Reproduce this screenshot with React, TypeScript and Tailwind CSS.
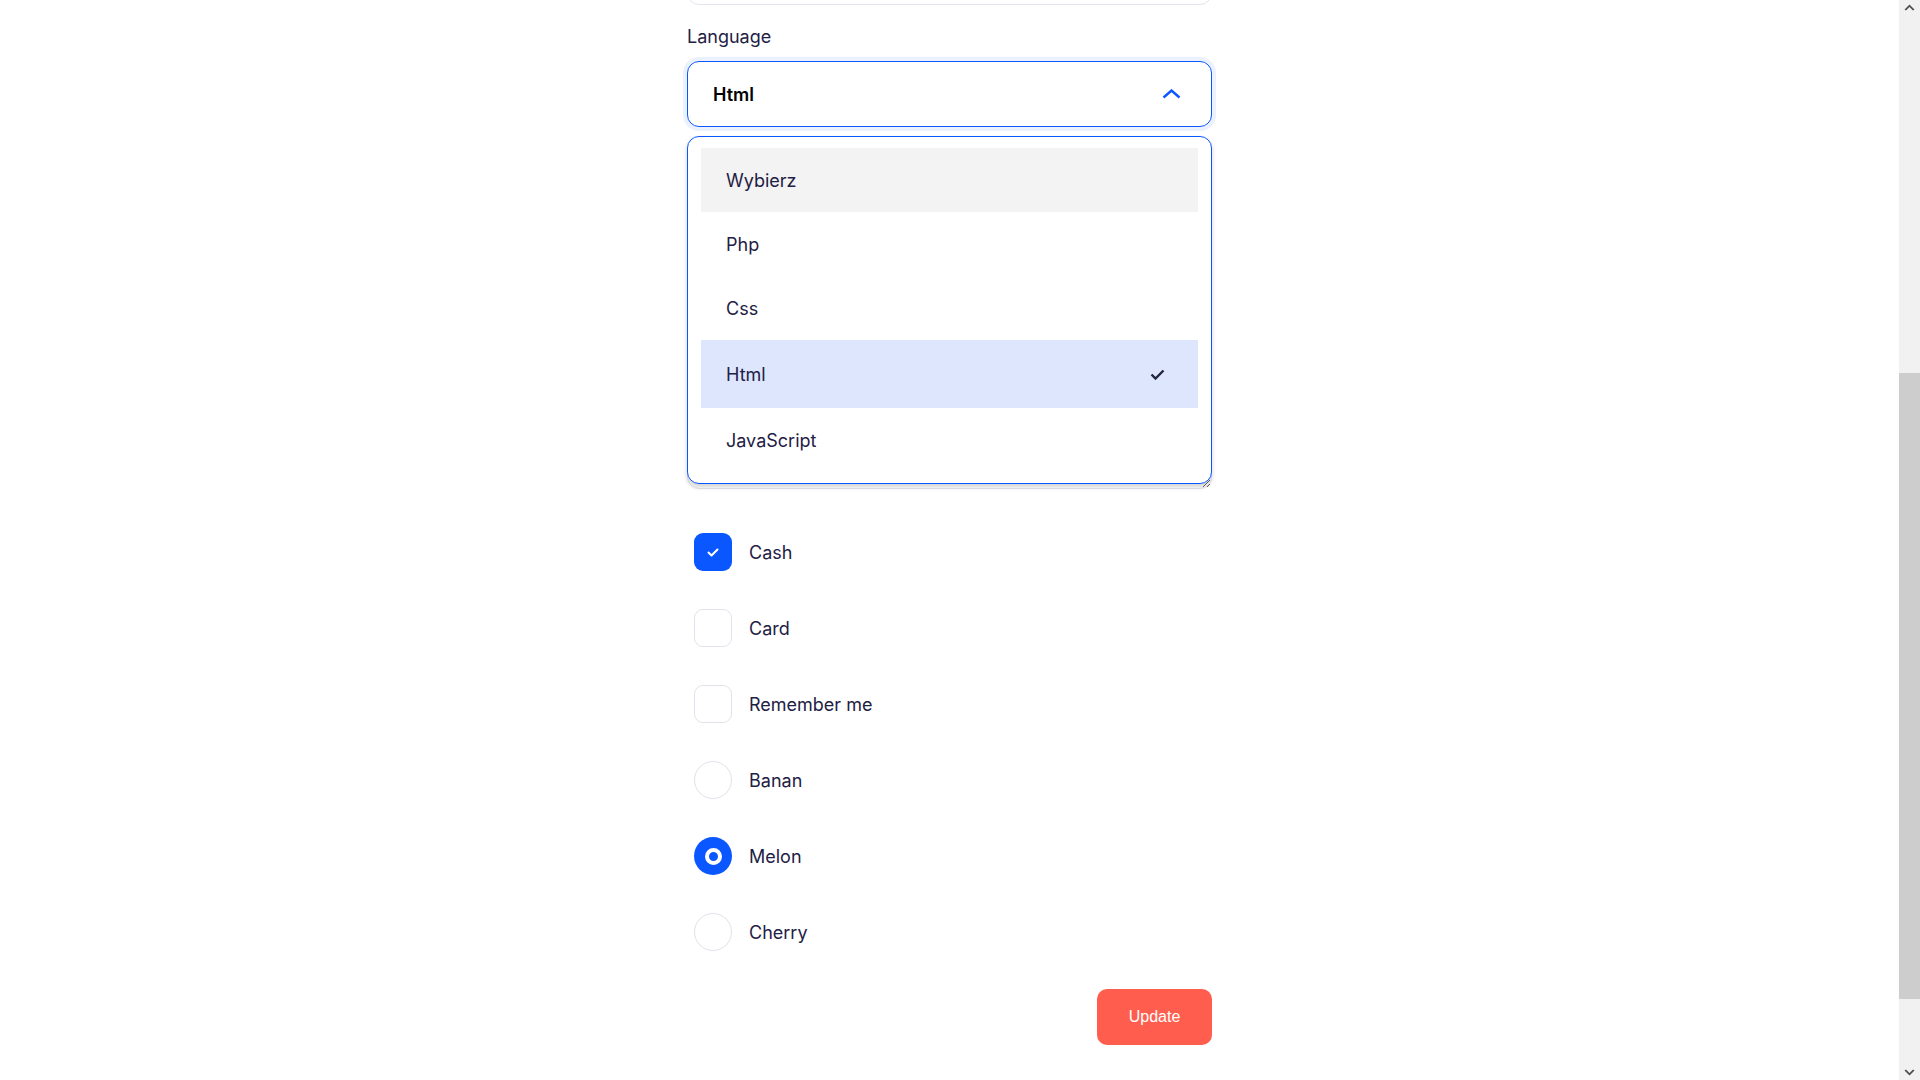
const options = ["Wybierz", "Php", "Css", "Html", "JavaScript"];

function CheckRow({ label, checked, round }: { label: string; checked?: boolean; round?: boolean }) {
  const shape = round ? "rounded-full" : "rounded-[9px]";
  return (
    <label className="flex items-center gap-[17px] pl-[7px] h-[38px]">
      {checked ? (
        <span className={`flex items-center justify-center w-[38px] h-[38px] bg-[#0b57ff] ${shape}`}>
          {round ? (
            <span className="w-[17px] h-[17px] rounded-full border-[4px] border-white" />
          ) : (
            <svg width="12" height="9" viewBox="0 0 12 9" fill="none">
              <path d="M1.5 4.5l3 3 6-6" stroke="white" strokeWidth="2" strokeLinecap="round" strokeLinejoin="round" />
            </svg>
          )}
        </span>
      ) : (
        <span className={`w-[38px] h-[38px] border border-[#e2e2ec] bg-white ${shape}`} />
      )}
      <span className="text-[18px] leading-[27px] text-[#1e2044]">{label}</span>
    </label>
  );
}

function Scrollbar() {
  return (
    <div className="flex flex-col w-[21px] h-screen bg-[#f1f1f1] shrink-0">
      <div className="h-[17px] flex items-start justify-center pt-[4px]">
        <svg width="11" height="7" viewBox="0 0 11 7" fill="#505050">
          <path d="M5.5 0.5L10.5 5.5 9 6.5 5.5 3 2 6.5 0.5 5.5z" />
        </svg>
      </div>
      <div className="h-[356px]" />
      <div className="h-[626px] bg-[#cdcdcd]" />
      <div className="flex-1" />
      <div className="h-[17px] flex items-end justify-center pb-[4px]">
        <svg width="11" height="7" viewBox="0 0 11 7" fill="#505050">
          <path d="M5.5 6.5L10.5 1.5 9 0.5 5.5 4 2 0.5 0.5 1.5z" />
        </svg>
      </div>
    </div>
  );
}

export default function App() {
  return (
    <div className="flex h-screen overflow-hidden bg-white font-['Inter',sans-serif] text-[#1e2044]">
      <main className="flex-1 min-w-0">
        <div className="w-[525px] mx-auto">
          {/* previous input, scrolled mostly out of view */}
          <div className="h-[66px] -mt-[61px] mb-[18px] rounded-[12px] border border-[#e4e4ee]" />

          {/* Language select, opened */}
          <div className="mb-[18px]">
            <label className="block text-[18px] leading-[27px] mb-[11px]">Language</label>
            <div className="relative">
              <div className="flex items-center justify-between h-[66px] rounded-[12px] border border-[#0b57ff] bg-white pl-[25px] pr-[30px] shadow-[0_0_0_4px_#ecf1fe]">
                <span className="text-[18px] font-semibold text-black">Html</span>
                <svg width="19" height="10" viewBox="0 0 19 10" fill="none">
                  <path d="M1.5 8.5l8-7 8 7" stroke="#0b57ff" strokeWidth="2.4" />
                </svg>
              </div>

              <div className="absolute left-0 right-0 top-[75px] z-10 rounded-[12px] border border-[#0b57ff] bg-white px-[13px] py-[11px] shadow-[0_3px_5px_rgba(0,0,0,0.18)]">
                {options.map((o) =>
                  o === "Html" ? (
                    <div key={o} className="flex items-center justify-between h-[68px] bg-[#dde6fd] pl-[25px] pr-[33px]">
                      <span className="text-[18px]">{o}</span>
                      <svg width="15" height="11" viewBox="0 0 15 11" fill="none">
                        <path d="M1.5 5.5l4 4 8-8" stroke="#23253f" strokeWidth="2.4" />
                      </svg>
                    </div>
                  ) : (
                    <div
                      key={o}
                      className={`flex items-center h-[64px] pl-[25px] text-[18px] ${o === "Wybierz" ? "bg-[#f3f3f3]" : ""}`}
                    >
                      {o}
                    </div>
                  )
                )}
              </div>
            </div>
          </div>

          {/* textarea underneath the open menu, only its grip shows */}
          <div className="mb-[44px] pt-[38px]">
            <textarea className="block w-full h-[306px] rounded-[12px] border border-[#e4e4ee] p-[20px] outline-none" />
          </div>

          <div className="flex flex-col gap-[38px]">
            <CheckRow label="Cash" checked />
            <CheckRow label="Card" />
            <CheckRow label="Remember me" />
            <CheckRow label="Banan" round />
            <CheckRow label="Melon" round checked />
            <CheckRow label="Cherry" round />
          </div>

          <div className="flex justify-end mt-[38px]">
            <button className="w-[115px] h-[56px] rounded-[10px] bg-[#ff5e4e] text-white text-[16px] font-['Liberation_Sans',sans-serif]">
              Update
            </button>
          </div>
        </div>
      </main>
      <Scrollbar />
    </div>
  );
}
